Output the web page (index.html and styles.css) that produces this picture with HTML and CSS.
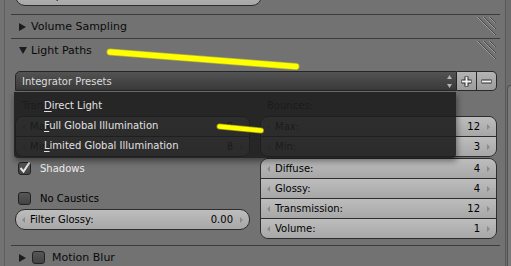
FILE: index.html
```html
<!DOCTYPE html>
<html lang="en">
<head>
  <meta charset="UTF-8">
  <title>Light Paths</title>
  <link rel="stylesheet" href="styles.css">
</head>
<body>
<div class="screen">
  <div class="gutter"></div>

  <div class="panel">
    <div class="tail">
      <div class="field single">
        <span class="arrow-l"></span><span class="lbl">Clamp Indirect:</span><span class="val">0.00</span><span class="arrow-r"></span>
      </div>
    </div>

    <div class="header">
      <span class="tri closed"></span>Volume Sampling
      <svg class="grip" width="20" height="19" viewBox="0 0 20 19">
        <path d="M1 0 L19 18 M7 0 L19 12 M13 0 L19 6" stroke="#4a4a4a" stroke-width="1" fill="none"/>
        <path d="M0 0 L18 18 M6 0 L18 12 M12 0 L18 6" stroke="#9c9c9c" stroke-width="1" fill="none"/>
      </svg>
    </div>

    <div class="header">
      <span class="tri open"></span>Light Paths
      <svg class="grip" width="20" height="19" viewBox="0 0 20 19">
        <path d="M1 0 L19 18 M7 0 L19 12 M13 0 L19 6" stroke="#4a4a4a" stroke-width="1" fill="none"/>
        <path d="M0 0 L18 18 M6 0 L18 12 M12 0 L18 6" stroke="#9c9c9c" stroke-width="1" fill="none"/>
      </svg>
    </div>

    <div class="body">
      <div class="presets">
        <div class="preset">
          <span>Integrator Presets</span>
          <svg class="updown" width="5" height="13" viewBox="0 0 5 13">
            <path d="M2.5 0 L5 4 L0 4 Z M2.5 13 L5 9 L0 9 Z" fill="#b4b4b4"/>
          </svg>
        </div>
        <div class="pm">
          <svg width="13" height="13" viewBox="0 0 13 13">
            <path d="M6.5 1.5 V11.5 M1.5 6.5 H11.5" stroke="#2a2a2a" stroke-width="4" fill="none"/>
            <path d="M6.5 2 V11 M2 6.5 H11" stroke="#f2f2f2" stroke-width="2" fill="none"/>
          </svg>
        </div>
        <div class="pm last">
          <svg width="13" height="13" viewBox="0 0 13 13">
            <path d="M1.5 6.5 H11.5" stroke="#2a2a2a" stroke-width="4" fill="none"/>
            <path d="M2 6.5 H11" stroke="#f2f2f2" stroke-width="2" fill="none"/>
          </svg>
        </div>
      </div>

      <div class="cols">
        <div class="col">
          <div class="label">Transparency:</div>
          <div class="group">
            <div class="field"><span class="arrow-l"></span><span class="lbl">Max:</span><span class="val">8</span><span class="arrow-r"></span></div>
            <div class="field"><span class="arrow-l"></span><span class="lbl">Min:</span><span class="val">8</span><span class="arrow-r"></span></div>
          </div>
          <div class="check on">
            <span class="box">
              <svg width="13" height="13" viewBox="0 0 13 13">
                <path d="M2.5 6 L5.5 9.5 L11.5 0.5" stroke="#e4e4e4" stroke-width="2" fill="none"/>
              </svg>
            </span>Shadows
          </div>
          <div class="check spaced"><span class="box"></span>No Caustics</div>
          <div class="field single glossy"><span class="arrow-l"></span><span class="lbl">Filter Glossy:</span><span class="val">0.00</span><span class="arrow-r"></span></div>
        </div>

        <div class="col">
          <div class="label">Bounces:</div>
          <div class="group">
            <div class="field"><span class="arrow-l"></span><span class="lbl">Max:</span><span class="val">12</span><span class="arrow-r"></span></div>
            <div class="field"><span class="arrow-l"></span><span class="lbl">Min:</span><span class="val">3</span><span class="arrow-r"></span></div>
          </div>
          <div class="group next">
            <div class="field"><span class="arrow-l"></span><span class="lbl">Diffuse:</span><span class="val">4</span><span class="arrow-r"></span></div>
            <div class="field"><span class="arrow-l"></span><span class="lbl">Glossy:</span><span class="val">4</span><span class="arrow-r"></span></div>
            <div class="field"><span class="arrow-l"></span><span class="lbl">Transmission:</span><span class="val">12</span><span class="arrow-r"></span></div>
            <div class="field"><span class="arrow-l"></span><span class="lbl">Volume:</span><span class="val">1</span><span class="arrow-r"></span></div>
          </div>
        </div>
      </div>

      <div class="menu">
        <div class="menu-item"><u>D</u>irect Light</div>
        <div class="menu-item"><u>F</u>ull Global Illumination</div>
        <div class="menu-item"><u>L</u>imited Global Illumination</div>
      </div>
    </div>

    <div class="header">
      <span class="tri closed"></span><span class="box small"></span>Motion Blur
    </div>
  </div>

  <div class="scroll"><div class="thumb"></div></div>

  <svg class="marks" width="511" height="266" viewBox="0 0 511 266">
    <line x1="110" y1="52" x2="296" y2="66.5" stroke="#f4f400" stroke-width="7" stroke-linecap="round" opacity="0.5"/>
    <line x1="110" y1="52" x2="296" y2="66.5" stroke="#ffff00" stroke-width="5.5" stroke-linecap="round"/>
    <line x1="219.5" y1="126.5" x2="261" y2="130.5" stroke="#f4f400" stroke-width="6" stroke-linecap="round" opacity="0.5"/>
    <line x1="219.5" y1="126.5" x2="261" y2="130.5" stroke="#ffff00" stroke-width="4.5" stroke-linecap="round"/>
  </svg>
</div>
</body>
</html>
```

FILE: styles.css
```css
html, body {
  margin: 0;
  padding: 0;
  background: #727272;
  font-family: "DejaVu Sans", sans-serif;
  font-size: 10px;
  color: #000;
  overflow: hidden;
}

.screen {
  position: relative;
  display: flex;
  width: 511px;
  height: 266px;
  overflow: hidden;
}

.gutter {
  width: 4px;
  border-right: 1px solid #5e5e5e;
}

.panel {
  width: 500px;
  padding: 0 5px 0 6px;
  box-sizing: border-box;
}

.scroll {
  flex: 1;
  border-left: 1px solid #595959;
  background: #6c6c6c;
}

.thumb {
  margin: 85px 0 0 1px;
  height: 200px;
  border: 1px solid #505050;
  border-right: none;
  border-radius: 4px 0 0 0;
  background: #7a7a7a;
}

/* top of the previous panel, cut off */
.tail {
  height: 14px;
  overflow: hidden;
  padding: 0 3px 0 4px;
}

.tail .field {
  width: 233px;
  margin-top: -15px;
}

/* panel headers */
.header {
  display: flex;
  align-items: center;
  height: 24px;
  box-sizing: border-box;
  border-top: 1px solid #3c3c3c;
  padding-left: 8px;
  font-size: 11px;
  color: #0a0a0a;
}

.tri {
  width: 0;
  height: 0;
  margin-right: 5px;
}

.tri.closed {
  border-left: 7px solid #1c1c1c;
  border-top: 4px solid transparent;
  border-bottom: 4px solid transparent;
}

.tri.open {
  border-top: 7px solid #1c1c1c;
  border-left: 4px solid transparent;
  border-right: 4px solid transparent;
  margin-right: 4px;
}

.grip {
  margin-left: auto;
  margin-right: 3px;
  align-self: flex-start;
  margin-top: 2px;
}

/* panel body */
.body {
  position: relative;
  padding: 9px 3px 6px 4px;
}

.presets {
  display: flex;
  height: 20px;
}

.preset {
  flex: 1;
  display: flex;
  align-items: center;
  padding: 0 4px 0 6px;
  border: 1px solid #262626;
  border-radius: 5px 0 0 0;
  background: linear-gradient(#535353, #393939);
  color: #dcdcdc;
}

.preset span {
  flex: 1;
}

.pm {
  width: 19px;
  display: flex;
  align-items: center;
  justify-content: center;
  border: 1px solid #2a2a2a;
  border-left: none;
  background: linear-gradient(#b4b4b4, #9c9c9c);
}

.pm.last {
  border-radius: 0 5px 5px 0;
}

.cols {
  display: grid;
  grid-template-columns: 235px 1fr;
  column-gap: 10px;
  margin-top: 5px;
}

.label {
  height: 20px;
  line-height: 20px;
  padding-left: 7px;
}

/* number fields */
.field {
  display: flex;
  align-items: center;
  height: 19px;
  padding: 0 6px;
  background: linear-gradient(#bdbdbd, #a7a7a7);
}

.field.single {
  border: 1px solid #2d2d2d;
  border-radius: 10px;
}

.group {
  border: 1px solid #2d2d2d;
  border-radius: 8px;
  overflow: hidden;
}

.group.next {
  margin-top: 1px;
}

.group .field + .field {
  border-top: 1px solid #2d2d2d;
}

.lbl {
  flex: 1;
  margin-left: 5px;
}

.val {
  margin-right: 7px;
}

.arrow-l,
.arrow-r {
  width: 0;
  height: 0;
  border-top: 3px solid transparent;
  border-bottom: 3px solid transparent;
}

.arrow-l {
  border-right: 3px solid #8a8a8a;
}

.arrow-r {
  border-left: 3px solid #8a8a8a;
}

.glossy {
  margin-top: 1px;
}

/* checkboxes */
.check {
  display: flex;
  align-items: center;
  height: 20px;
  padding-left: 3px;
  margin-top: 1px;
}

.check.on {
  color: #ececec;
}

.check.spaced {
  margin-top: 10px;
}

.box {
  position: relative;
  width: 11px;
  height: 11px;
  margin-right: 9px;
  border: 1px solid #222;
  border-radius: 3px;
  background: linear-gradient(#575757, #434343);
}

.box svg {
  position: absolute;
  left: -1px;
  top: -1px;
}

.box.small {
  margin-right: 7px;
  margin-left: 1px;
}

/* open preset menu */
.menu {
  position: absolute;
  top: 30px;
  left: 3px;
  width: 442px;
  height: 66px;
  box-sizing: border-box;
  padding-top: 4px;
  background: rgba(30, 30, 30, 0.9);
  border-radius: 0 0 4px 4px;
  box-shadow: 1px 3px 6px rgba(0, 0, 0, 0.45);
  color: #e2e2e2;
}

.menu-item {
  height: 20px;
  line-height: 20px;
  padding-left: 30px;
}

.menu-item u {
  text-underline-offset: 2px;
}

/* highlighter strokes drawn over the shot */
.marks {
  position: absolute;
  left: 0;
  top: 0;
  pointer-events: none;
}
```
